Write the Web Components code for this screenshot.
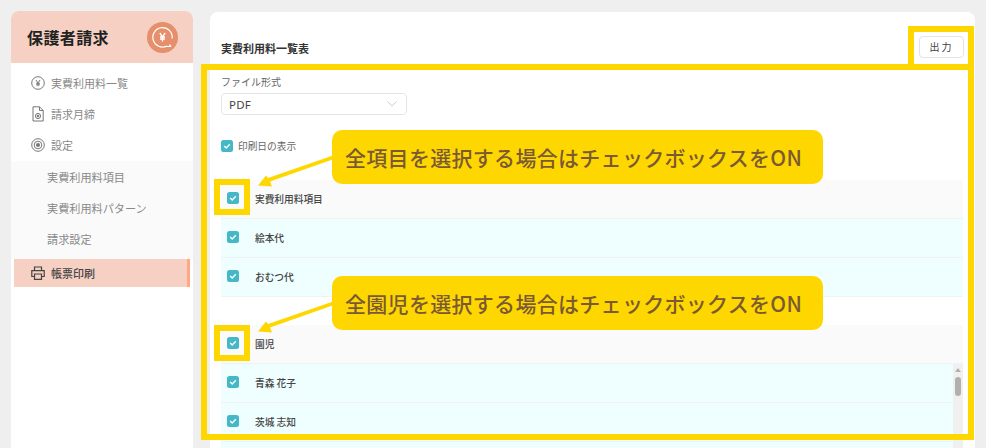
<!DOCTYPE html>
<html lang="ja"><head><meta charset="utf-8">
<style>
html,body{margin:0;height:448px;overflow:hidden;background:#efefef}
body{font-family:"Noto Sans CJK JP","Noto Sans",sans-serif}
</style></head><body>
<app-page></app-page>
<script>
const ICONS={
yen:'<svg width="14" height="14" viewBox="0 0 14 14" fill="none" stroke="#777" stroke-width="1"><circle cx="7" cy="7" r="6.300"/><path d="M4.900 3.900 7 7l2.100-3.100M7 7v3.300M5.100 7.300h3.800M5.100 8.800h3.800"/></svg>',
doc:'<svg width="14" height="16" viewBox="0 0 14 16" fill="none" stroke="#777" stroke-width="1"><path d="M2 .8h6.500L12.200 4.500v10.500H2z"/><path d="M8.500.8v3.700h3.700"/><circle cx="7" cy="10" r="2.600"/><circle cx="7" cy="10" r=".9" fill="#777"/></svg>',
gear:'<svg width="14" height="14" viewBox="0 0 14 14" fill="none" stroke="#777"><circle cx="7" cy="7" r="6.300" stroke-width="1"/><circle cx="7" cy="7" r="3.800" stroke-width="1"/><circle cx="7" cy="7" r="2" fill="#777" stroke="none"/></svg>',
print:'<svg width="14" height="14" viewBox="0 0 14 14" fill="none" stroke="#444" stroke-width="1.200"><path d="M3.500 4.500V1h7v3.500"/><path d="M3.500 10.500H.8V4.600h12.400v5.900h-2.700"/><path d="M3.500 8h7v5.300h-7z"/></svg>'};

customElements.define('nav-item',class extends HTMLElement{
 connectedCallback(){
  const s=this.attachShadow({mode:'open'});
  const ic=this.getAttribute('icon');
  s.innerHTML=`<style>
  :host{display:flex;align-items:center;height:31px;padding-left:20px;gap:6px;font-size:11px;color:#888}
  :host([sub]){padding-left:36px;font-size:11.150px}
  :host([active]){height:28px;margin:0 3px;padding-left:17px;background:#f5d0c3;border-right:3px solid #ffa883;color:#444;font-weight:500}
  .i{width:14px;display:flex;justify-content:center}
  </style>${ic?`<span class="i">${ICONS[ic]}</span>`:''}<slot></slot>`;
 }
});
customElements.define('side-bar',class extends HTMLElement{
 connectedCallback(){
  const s=this.attachShadow({mode:'open'});
  s.innerHTML=`<style>
  :host{display:block;width:182px;flex:none;background:#fff;border-radius:8px 8px 0 0;overflow:hidden}
  header{height:52px;background:#f5d0c3;display:flex;align-items:center;justify-content:space-between;padding:0 15px 0 16px;box-sizing:border-box}
  h1{margin:0;font-size:16px;font-weight:700;color:#222;letter-spacing:.4px}
  .logo{width:31px;height:31px}
  nav{padding-top:4px}
  .sub{background:#fafafa;margin-top:1px;padding-bottom:5px}
  </style>
  <header><h1>保護者請求</h1>
  <svg class="logo" viewBox="0 0 31 31" fill="none"><circle cx="15.500" cy="15.500" r="15.500" fill="#e58f6c"/><path d="M20 24A9.700 9.700 0 1 1 25.200 16.500" stroke="#fff" stroke-width="1.200"/><path d="M17.500 24.500h6.500M22.200 22.600l2 1.900" stroke="#fff" stroke-width="1.200"/><path d="M12.800 11 15.500 14.800 18.200 11M15.500 14.800v4.700M13 15h5M13 17h5" stroke="#fff" stroke-width="1.300"/></svg></header>
  <nav><nav-item icon="yen">実費利用料一覧</nav-item><nav-item icon="doc">請求月締</nav-item><nav-item icon="gear">設定</nav-item>
  <div class="sub"><nav-item sub>実費利用料項目</nav-item><nav-item sub>実費利用料パターン</nav-item><nav-item sub>請求設定</nav-item></div>
  <nav-item icon="print" active>帳票印刷</nav-item></nav>`;
 }
});
customElements.define('check-box',class extends HTMLElement{
 connectedCallback(){
  this.attachShadow({mode:'open'}).innerHTML=`<style>:host{display:block;width:12px;height:12px;flex:none}svg{display:block}</style>
  <svg width="12" height="12" viewBox="0 0 12 12"><rect width="12" height="12" rx="2.500" fill="#45b8c8"/><path d="M3.200 6.100 5.200 8 8.800 4.300" fill="none" stroke="#fff" stroke-width="1.400"/></svg>`;
 }
});
customElements.define('data-row',class extends HTMLElement{
 connectedCallback(){
  this.attachShadow({mode:'open'}).innerHTML=`<style>
  :host{display:flex;align-items:center;gap:16.500px;height:38px;padding-left:5.500px;background:#effefe;border-bottom:1px solid #f0f3f3;font-size:9.700px;font-weight:500;color:#444}
  :host([head]){background:#fafafa}
  check-box{margin-top:-2px}
  </style><check-box></check-box><slot></slot>`;
 }
});
customElements.define('call-out',class extends HTMLElement{
 connectedCallback(){
  this.attachShadow({mode:'open'}).innerHTML=`<style>
  :host{position:absolute;left:332px;width:491px;height:54px;box-sizing:border-box;padding-left:13px;display:flex;align-items:center;background:#ffd700;border-radius:10px;color:#7a5a35;font-size:21px;font-weight:500;letter-spacing:.3px;white-space:nowrap}
  </style><slot></slot>`;
 }
});
customElements.define('hi-frame',class extends HTMLElement{
 connectedCallback(){
  this.attachShadow({mode:'open'}).innerHTML=`<style>
  :host{position:absolute;box-sizing:border-box;border:6px solid #ffd700;pointer-events:none}
  </style>`;
 }
});
customElements.define('main-panel',class extends HTMLElement{
 connectedCallback(){
  const s=this.attachShadow({mode:'open'});
  s.innerHTML=`<style>
  :host{display:block;width:765px;flex:none;margin-top:1px;background:#fff;border-radius:8px 8px 0 0;padding:0 11px;box-sizing:border-box;height:437px;overflow:hidden}
  .top{display:flex;justify-content:space-between;align-items:center;height:52px;padding-top:19px;box-sizing:border-box}
  h2{margin:0;font-size:11px;font-weight:700;color:#333}
  button{all:unset;box-sizing:border-box;width:45px;height:22px;margin-top:-1px;border:1px solid #e4e4e4;border-radius:4px;text-align:center;font:400 10px/20px "Noto Sans CJK JP",sans-serif;letter-spacing:2px;color:#444}
  .lbl{font-size:10px;color:#666;margin-top:11px;line-height:14px}
  .sel{width:186px;height:22px;margin-top:4px;border:1px solid #e4e4e4;border-radius:4px;box-sizing:border-box;display:flex;align-items:center;justify-content:space-between;padding:0 9px 0 7px;font:400 11.500px "Noto Sans",sans-serif;color:#444;letter-spacing:.2px}
  .date{display:flex;align-items:center;gap:5px;margin-top:24px;height:14px;font-size:9.700px;color:#666}
  .tbl{margin-top:27px;margin-right:1px}
  .t2{margin-top:28px;margin-right:1px}
  .rows{position:relative}
  .sb{position:absolute;right:0;top:0;width:10px;height:90px;background:#f0f0f0}
  .sb i{position:absolute;left:1.500px;top:4px;border:3.500px solid transparent;border-top:0;border-bottom:4px solid #b0b0b0}
  .sb b{position:absolute;left:2px;top:13px;width:6px;height:19px;border-radius:3px;background:#b0b0b0}
  </style>
  <div class="top"><h2>実費利用料一覧表</h2><button>出力</button></div>
  <div class="lbl">ファイル形式</div>
  <div class="sel"><span>PDF</span><svg width="10" height="6" viewBox="0 0 10 6" fill="none" stroke="#ccc"><path d="M.5.5 5 5.200 9.500.5"/></svg></div>
  <div class="date"><check-box></check-box>印刷日の表示</div>
  <div class="tbl"><data-row head>実費利用料項目</data-row><data-row>絵本代</data-row><data-row>おむつ代</data-row></div>
  <div class="t2"><data-row head>園児</data-row><div class="rows"><data-row>青森 花子</data-row><data-row>茨城 志知</data-row><data-row></data-row><div class="sb"><i></i><b></b></div></div></div>`;
 }
});
customElements.define('app-page',class extends HTMLElement{
 connectedCallback(){
  this.attachShadow({mode:'open'}).innerHTML=`<style>
  :host{display:block;position:relative;width:986px;height:448px;overflow:hidden}
  .wrap{display:flex;gap:17px;padding:11px 0 0 11px;height:437px}
  svg.arrows{position:absolute;left:0;top:0;overflow:visible}
  </style>
  <div class="wrap"><side-bar></side-bar><main-panel></main-panel></div>
  <hi-frame style="left:201px;top:64px;width:773px;height:376px"></hi-frame>
  <hi-frame style="left:908px;top:26px;width:66px;height:44px"></hi-frame>
  <hi-frame style="left:214px;top:179px;width:36px;height:36px"></hi-frame>
  <hi-frame style="left:214px;top:325px;width:36px;height:36px"></hi-frame>
  <svg class="arrows" width="986" height="448" fill="#ffd700">
   <path d="M333 155.500 268 178 266 175.500 258 185.500 272 186.500 270 181.500 334 159z"/>
   <path d="M333 301.500 268 324 266 321.500 258 331.500 272 332.500 270 327.500 334 305z"/>
  </svg>
  <call-out style="top:130px">全項目を選択する場合はチェックボックスをON</call-out>
  <call-out style="top:276px">全園児を選択する場合はチェックボックスをON</call-out>`;
 }
});
</script>
</body></html>
